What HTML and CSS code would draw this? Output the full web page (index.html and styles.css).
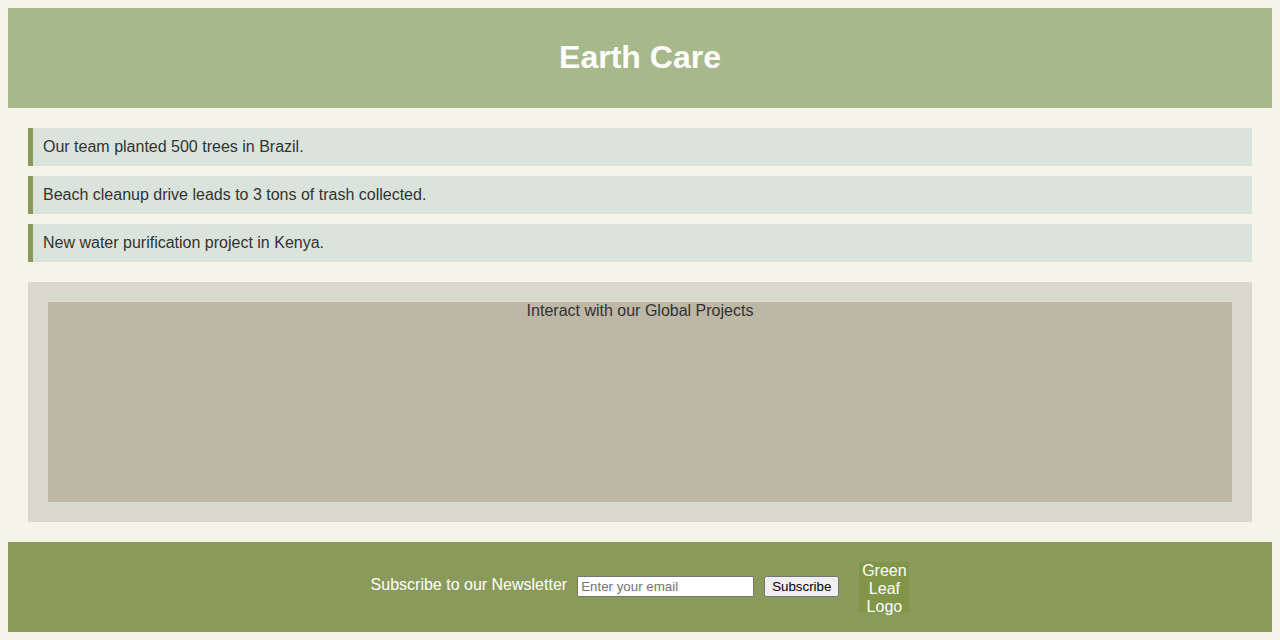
FILE: index.html
```html
<!DOCTYPE html>
<html lang="en">
<head>
<meta charset="utf-8">
<title>Earth Care</title>
<link rel="stylesheet" href="styles.css">
</head>
<body>
<header class="site-header">
  <h1 class="site-title">Earth Care</h1>
</header>
<main class="content">
  <section class="news">
    <div class="news-item">Our team planted 500 trees in Brazil.</div>
    <div class="news-item">Beach cleanup drive leads to 3 tons of trash collected.</div>
    <div class="news-item">New water purification project in Kenya.</div>
  </section>
  <section class="map-section">
    <div class="map">Interact with our Global Projects</div>
  </section>
</main>
<footer class="site-footer">
  <span class="newsletter-label">Subscribe to our Newsletter</span>
  <form class="newsletter-form">
    <input class="email-input" type="email" placeholder="Enter your email">
    <button class="subscribe-btn" type="button">Subscribe</button>
  </form>
  <div class="logo">Green Leaf Logo</div>
</footer>
</body>
</html>
```
FILE: styles.css
```css
body {
  margin: 8px;
  background: #f4f4e9;
  font-family: "Liberation Sans", Arial, sans-serif;
  color: #333;
}
.site-header {
  background: #a7b88a;
  height: 100px;
  display: flex;
  align-items: center;
  justify-content: center;
}
.site-title {
  margin: 0 0 2px;
  font-size: 32px;
  font-weight: bold;
  color: #fff;
}
.content {
  padding: 20px;
}
.news {
  display: flex;
  flex-direction: column;
  gap: 10px;
}
.news-item {
  background: #dae3dc;
  border-left: 5px solid #8a9a5b;
  padding: 10px;
  font-size: 16px;
  line-height: 18px;
}
.map-section {
  margin-top: 20px;
  background: #d9d8cc;
  padding: 20px;
}
.map {
  background: #bdb7a6;
  height: 200px;
  text-align: center;
  font-size: 16px;
  line-height: 18px;
}
.site-footer {
  background: #8a9a5b;
  padding: 20px;
  display: flex;
  align-items: center;
  justify-content: center;
  color: #fff;
}
.newsletter-label {
  font-size: 16px;
  line-height: 18px;
  margin: 0 10px 4px 0;
}
.newsletter-form {
  display: flex;
  align-items: center;
  gap: 10px;
  margin: 0 20px 2px 0;
}
.email-input {
  box-sizing: border-box;
  width: 177px;
  height: 21px;
}
.logo {
  width: 50px;
  height: 50px;
  background: #809548;
  text-align: center;
  font-size: 16px;
  line-height: 18px;
  color: #fff;
  overflow: visible;
}
```
